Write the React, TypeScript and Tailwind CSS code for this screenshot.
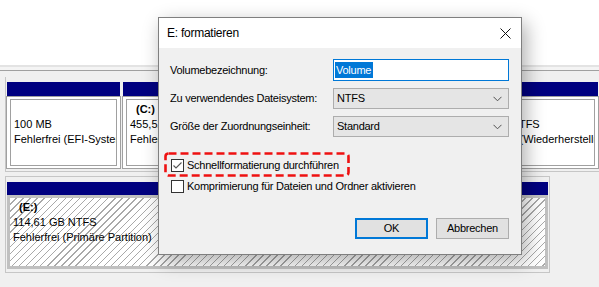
import React from "react";

const FONT = "font-['Liberation_Sans',Arial,sans-serif] text-[11px] tracking-[-0.25px] text-black";

function Partition({
  width,
  name,
  lines,
  grow,
}: {
  width?: string;
  name?: string;
  lines: string[];
  grow?: boolean;
}) {
  return (
    <div className={`flex flex-col shrink-0 ${grow ? "flex-1 min-w-0" : ""} ${width ?? ""}`}>
      <div className="mx-px h-[14px] bg-[#000080]" />
      <div className="border border-[#a0a0a0] bg-white px-[3px] pt-[2px] pb-[2px]">
        <div className="h-[67px] border border-[#a0a0a0] bg-white overflow-hidden pl-[3px] pt-[2px] leading-[15px] whitespace-nowrap tracking-normal">
          <div className="h-[15px] pl-[6px] font-bold">{name ?? ""}</div>
          {lines.map((l) => (
            <div key={l} className="h-[15px]">
              {l}
            </div>
          ))}
        </div>
      </div>
    </div>
  );
}

function Chevron() {
  return (
    <svg width="9" height="6" viewBox="0 0 9 6" className="shrink-0">
      <polyline points="0.5,0.8 4.5,4.8 8.5,0.8" fill="none" stroke="#505050" strokeWidth="1" />
    </svg>
  );
}

function Checkbox({ checked }: { checked?: boolean }) {
  return (
    <div className="w-[13px] h-[13px] border border-[#333333] bg-white shrink-0 flex items-center justify-center">
      {checked && (
        <svg width="11" height="11" viewBox="0 0 11 11">
          <polyline points="1.5,5.5 4,8 9.5,2.5" fill="none" stroke="#555555" strokeWidth="1.1" />
        </svg>
      )}
    </div>
  );
}

export default function App() {
  return (
    <div className={`relative w-[599px] h-[287px] overflow-hidden bg-[#f0f0f0] ${FONT}`}>
      {/* top white area */}
      <div className="h-[67px] bg-white border-b-2 border-[#e3e3e3]" />
      <div className="h-[4px] bg-[#f4f4f4] border-b border-[#a0a0a0]" />

      {/* disk pane */}
      <div className="pl-[5px] pt-[6px]">
        {/* upper disk */}
        <div className="border-l border-b border-[#c6c6c6] pt-[5px] pb-[2px] flex gap-px">
          <Partition width="w-[115px]" lines={["100 MB", "Fehlerfrei (EFI-Systempartition)"]} />
          <Partition width="w-[339px]" name="(C:)" lines={["455,52 GB NTFS", "Fehlerfrei (Startpartition)"]} />
          <Partition grow lines={["529 MB NTFS", "Fehlerfrei (Wiederherstellungspartition)"]} />
        </div>

        {/* lower disk */}
        <div className="mt-[4px] w-[545px] h-[97px] border border-[#c6c6c6] px-px pt-[5px]">
          <div className="h-[13px] bg-[#000080]" />
          <div className="h-[74px] border-[3px] border-[#c0c0c0] bg-[repeating-linear-gradient(135deg,#ffffff_0px,#ffffff_4px,#a9a9a9_4px,#a9a9a9_5px)] pl-[3px] pt-[2px] leading-[15px] whitespace-nowrap overflow-hidden tracking-normal">
            <div className="h-[15px] pl-[6px] font-bold">(E:)</div>
            <div className="h-[15px]">114,61 GB NTFS</div>
            <div className="h-[15px]">Fehlerfrei (Primäre Partition)</div>
          </div>
        </div>
      </div>

      {/* dialog window */}
      <div className="absolute left-[158px] top-[17px] w-[364px] h-[238px] border border-[#7f7f7f] bg-[#f0f0f0] shadow-[4px_6px_18px_rgba(0,0,0,0.32)] flex flex-col">
        <div className="h-[30px] bg-white flex items-center justify-between pl-[8px] pr-[10px] shrink-0">
          <span className="text-[12px]">E: formatieren</span>
          <svg width="11" height="11" viewBox="0 0 11 11">
            <line x1="0.5" y1="0.5" x2="10.5" y2="10.5" stroke="#111" strokeWidth="1" />
            <line x1="10.5" y1="0.5" x2="0.5" y2="10.5" stroke="#111" strokeWidth="1" />
          </svg>
        </div>

        <div className="relative flex flex-col pl-[11px] pr-[12px] pt-[11px]">
          {/* row 1 */}
          <div className="flex items-center h-[22px]">
            <div className="w-[163px]">Volumebezeichnung:</div>
            <div className="w-[176px] h-[22px] border border-[#0078d7] bg-white flex items-center pl-px">
              <span className="bg-[#0078d7] text-white h-[16px] leading-[16px] pl-px pr-[2px]">Volume</span>
            </div>
          </div>
          {/* row 2 */}
          <div className="flex items-center h-[21px] mt-[7px]">
            <div className="w-[163px]">Zu verwendendes Dateisystem:</div>
            <div className="w-[176px] h-[21px] border border-[#adadad] bg-[#e5e5e5] flex items-center justify-between pl-[3px] pr-[6px]">
              <span>NTFS</span>
              <Chevron />
            </div>
          </div>
          {/* row 3 */}
          <div className="flex items-center h-[21px] mt-[7px]">
            <div className="w-[163px]">Größe der Zuordnungseinheit:</div>
            <div className="w-[176px] h-[21px] border border-[#adadad] bg-[#e5e5e5] flex items-center justify-between pl-[3px] pr-[6px]">
              <span>Standard</span>
              <Chevron />
            </div>
          </div>

          {/* checkboxes */}
          <div className="flex items-center gap-[3px] h-[15px] mt-[21px] pl-px">
            <Checkbox checked />
            <span>Schnellformatierung durchführen</span>
          </div>
          <div className="flex items-center gap-[3px] h-[15px] mt-[6px] pl-px">
            <Checkbox />
            <span>Komprimierung für Dateien und Ordner aktivieren</span>
          </div>

          {/* buttons */}
          <div className="flex justify-end gap-[8px] mt-[24px]">
            <button className="w-[73px] h-[21px] border-2 border-[#0078d7] bg-[#e1e1e1] flex items-center justify-center">
              OK
            </button>
            <button className="w-[73px] h-[21px] border border-[#adadad] bg-[#e1e1e1] flex items-center justify-center">
              Abbrechen
            </button>
          </div>
        </div>

        {/* red dashed highlight */}
        <svg
          className="absolute left-[5px] top-[134px] pointer-events-none"
          width="186"
          height="25"
          viewBox="0 0 186 25"
        >
          <rect
            x="1.5"
            y="1.5"
            width="183"
            height="22"
            rx="3"
            fill="none"
            stroke="#ee1111"
            strokeWidth="2.6"
            strokeDasharray="8 4"
          />
        </svg>
      </div>
    </div>
  );
}
